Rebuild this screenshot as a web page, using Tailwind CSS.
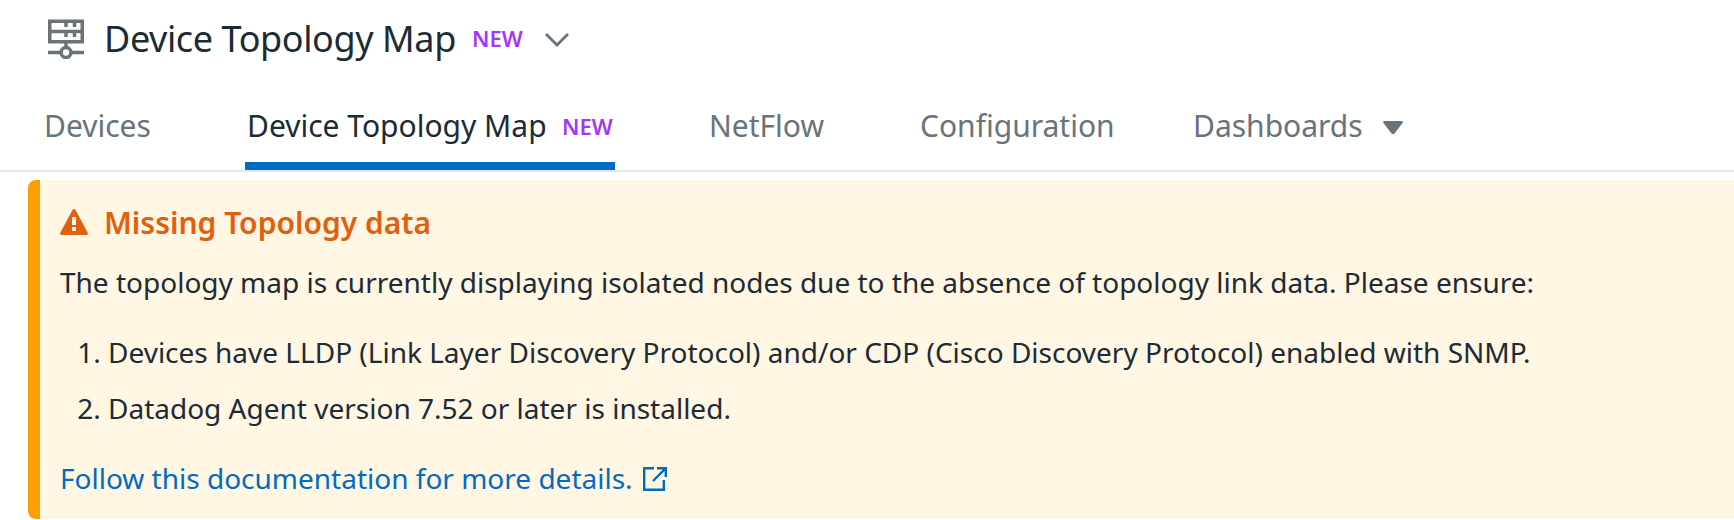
<!DOCTYPE html>
<html lang="en">
<head>
<meta charset="utf-8">
<title>Device Topology Map</title>
<script src="https://cdn.jsdelivr.net/npm/@tailwindcss/browser@4"></script>
</head>
<body class="h-[520px] overflow-hidden bg-white font-['Noto_Sans',sans-serif] text-[#1c2b34]">
<header class="flex h-[90px] items-start pt-[19px] pl-12">
  <svg class="h-10 w-9 shrink-0" viewBox="0 0 36 40" fill="none" stroke="#68737b" stroke-width="3.500">
    <path d="M1.750 2.250H34.250V22.750H1.750ZM1.750 12.500H34.250M18 2V8M26.500 2V8M18 12V18M26.500 12V18M18 22V28M0 33.500H12M24 33.500H36"/>
    <circle cx="18" cy="33.5" r="4.900"/>
  </svg>
  <h1 class="ml-5 w-[368px] text-[36px] leading-10 tracking-[-0.4px] whitespace-nowrap">Device Topology Map</h1>
  <span class="w-[73px] text-[22px] leading-[38px] font-semibold text-[#a435ff]">NEW</span>
  <svg class="mt-[14px] h-[14px] w-6" viewBox="0 0 24 14" fill="none" stroke="#68737b" stroke-width="2.800"><path d="M1 1L12 12L23 1"/></svg>
</header>
<nav class="flex h-[82px] border-b-2 border-[#e2e5ea] pl-11 text-[30px] leading-10 whitespace-nowrap text-[#68737b]">
  <a class="w-[201px] pt-4">Devices</a>
  <a class="mr-[94px] flex w-[370px] border-b-8 border-[#006bc2] pt-4 pl-0.5 text-[#1c2b34]"><span class="w-[315px]">Device Topology Map</span><span class="text-[22px] leading-10 font-semibold text-[#a435ff]">NEW</span></a>
  <a class="w-[211px] pt-4">NetFlow</a>
  <a class="w-[273px] pt-4">Configuration</a>
  <a class="flex pt-4"><span class="w-[190px]">Dashboards</span><svg class="mt-[15px] h-[14px] w-5" viewBox="0 0 20 14" fill="#68737b"><path d="M1 0H19Q20.500 .5 19.500 2L11.500 12.500Q10 14 8.500 12.500L.5 2Q-.5 .5 1 0Z"/></svg></a>
</nav>
<main class="mt-2 ml-7 h-[339px] rounded-l-lg border-l-[12px] border-[#fb9f00] bg-[#fff6e3] pt-[23px] pl-5 text-[28px] leading-10 whitespace-nowrap">
  <h2 class="flex text-[30px] font-semibold text-[#e0600d]">
    <svg class="mt-[6px] mr-4 h-[26px] w-7" viewBox="0 0 28 26"><path fill="#e0600d" d="M12.600 .8Q14-.8 15.400 .8L27.600 23.500Q28.400 26 26.500 26H1.500Q-.4 26 .4 23.500Z"/><path fill="#fff6e3" d="M12 8h4v8h-4zM12 18h4v4h-4z"/></svg>
    <span>Missing Topology data</span>
  </h2>
  <p class="mt-[19px]">The topology map is currently displaying isolated nodes due to the absence of topology link data. Please ensure:</p>
  <ol class="mt-[30px] flex list-decimal flex-col gap-4 pl-12">
    <li>Devices have LLDP (Link Layer Discovery Protocol) and/or CDP (Cisco Discovery Protocol) enabled with SNMP.</li>
    <li>Datadog Agent version 7.52 or later is installed.</li>
  </ol>
  <a class="mt-[30px] flex text-[#006bc2]"><span class="w-[583px]">Follow this documentation for more details.</span><svg class="mt-[9px] h-6 w-6" viewBox="0 0 24 24" fill="none" stroke="currentColor" stroke-width="2.400"><path d="M11 1.200H1.200V22.800H20.800V13M14 1.200H22.800V10M22.800 1.200L10 14"/></svg></a>
</main>
</body>
</html>
